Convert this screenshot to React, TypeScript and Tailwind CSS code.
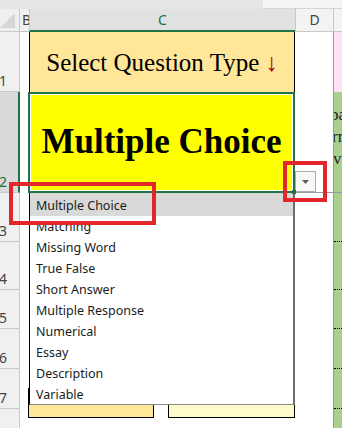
const choices = [
  "Multiple Choice",
  "Matching",
  "Missing Word",
  "True False",
  "Short Answer",
  "Multiple Response",
  "Numerical",
  "Essay",
  "Description",
  "Variable",
];

function RowHead({ n, selected = false }: { n: number; selected?: boolean }) {
  return (
    <div
      className={`flex items-end overflow-hidden border-b border-[#c8c8c8] pb-[2px] text-[14px] leading-[16px] ${
        selected
          ? "border-r-2 border-r-[#217346] bg-[#dadada] text-[#217346]"
          : "border-r border-r-[#c8c8c8] bg-[#f0f0f0] text-[#444]"
      }`}
    >
      <span className="-ml-[1px]">{n}</span>
    </div>
  );
}

function GreenCell() {
  return (
    <div className="flex flex-col justify-end border-l border-[#9a9a9a] bg-[#a9d08e]">
      <div className="border-b border-dotted border-black" />
    </div>
  );
}

export default function App() {
  return (
    <div className="relative h-[428px] w-[342px] overflow-hidden bg-white font-['Noto_Sans',sans-serif]">
      <div className="flex h-[9px]">
        <div className="w-[263px] bg-[#e6e6e6]" />
        <div className="flex-1 border-b border-[#d6d6d6] bg-[#f4f4f4]" />
      </div>

      <div className="grid grid-cols-[20px_9px_266px_38px_9px] grid-rows-[23px_60px_101px_49px_48px_39px_40px_40px_40px]">
        {/* column headers */}
        <div className="relative border-b border-r border-[#c8c8c8] bg-[#efefef]">
          <svg className="absolute left-0 top-[4px]" width="16" height="16" viewBox="0 0 16 16">
            <polygon points="0,15 15,0 15,15" fill="#d6d6d6" />
          </svg>
        </div>
        <div className="overflow-hidden border-b border-[#c8c8c8] bg-[#f0f0f0] pl-[2px] text-[14px] leading-[22px] text-[#444]">
          B
        </div>
        <div className="border-b-2 border-l border-[#217346] border-l-[#c8c8c8] bg-[#e1e1e1] text-center text-[14px] leading-[21px] text-[#217346]">
          C
        </div>
        <div className="border-b border-l border-[#c8c8c8] bg-[#f3f3f3] text-center text-[14px] leading-[22px] text-[#444]">
          D
        </div>
        <div className="border-b border-l border-[#c8c8c8] bg-[#f3f3f3]" />

        {/* row 1 */}
        <RowHead n={1} />
        <div className="bg-white" />
        <div className="flex items-center justify-center border-x border-black bg-[#ffe699] pt-[2px] font-['Liberation_Serif',serif] text-[25px] text-black">
          Select Question Type <span className="ml-[6px] text-[#a80000]">↓</span>
        </div>
        <div className="bg-white" />
        <div className="border-l border-[#9a9a9a] bg-[#fbe4fb]" />

        {/* row 2 */}
        <RowHead n={2} selected />
        <div className="bg-white" />
        <div className="-ml-[1px] border-2 border-[#217346]">
          <div className="flex h-full items-center justify-center border border-white bg-[#ffff00] font-['Liberation_Serif',serif] text-[35px] font-bold text-black">
            Multiple Choice
          </div>
        </div>
        <div className="border-b border-[#9a9a9a] bg-white" />
        <div className="overflow-hidden border-b border-l border-[#9a9a9a] bg-[#a9d08e] pt-[12px] font-['Liberation_Serif',serif] text-[17px] leading-[22px] text-[#222]">
          <div className="-ml-[4px] whitespace-nowrap">pa</div>
          <div className="-ml-[2px] whitespace-nowrap">rr</div>
          <div className="-ml-[1px] whitespace-nowrap">ve</div>
        </div>

        {/* rows 3 - 8 */}
        <RowHead n={3} />
        <div className="row-span-6 bg-white" />
        <div className="row-span-6 flex flex-col justify-end pb-[31px]">
          <div className="flex gap-[14px]">
            <div className="-ml-[1px] h-[30px] w-[126px] border border-black bg-[#ffe699]" />
            <div className="h-[30px] w-[128px] border border-black bg-[#fffccc]" />
          </div>
        </div>
        <div className="row-span-6 bg-white" />
        <GreenCell />
        <RowHead n={4} />
        <GreenCell />
        <RowHead n={5} />
        <GreenCell />
        <RowHead n={6} />
        <GreenCell />
        <RowHead n={7} />
        <GreenCell />
        <RowHead n={8} />
        <GreenCell />
      </div>

      {/* data validation list */}
      <div className="absolute left-[29px] top-[193px] h-[212px] w-[266px] border-b border-l border-r-2 border-black border-b-[#8a8a8a] border-r-[#6d6d6d] bg-white pt-[2px]">
        {choices.map((c, i) => (
          <div
            key={c}
            className={`h-[21px] pl-[6px] text-[12.5px] leading-[21px] text-[#1b1b1b] ${
              i === 0 ? "-mt-[2px] h-[23px] bg-[#d9d9d9] pt-[2px]" : ""
            }`}
          >
            {c}
          </div>
        ))}
      </div>

      {/* dropdown button */}
      <div className="absolute left-[295px] top-[171px] flex h-[21px] w-[21px] items-center justify-center border border-[#acacac] bg-[#f7f7f7]">
        <svg width="7" height="4" viewBox="0 0 7 4">
          <polygon points="0,0 7,0 3.5,4" fill="#5f5f5f" />
        </svg>
      </div>
      <div className="absolute left-[292px] top-[190px] h-[4px] w-[4px] bg-[#217346]" />

      {/* annotations */}
      <div className="absolute left-[9px] top-[182px] h-[43px] w-[147px] border-4 border-[#e3262b]" />
      <div className="absolute left-[283px] top-[161px] h-[41px] w-[44px] border-4 border-[#e3262b]" />
    </div>
  );
}
